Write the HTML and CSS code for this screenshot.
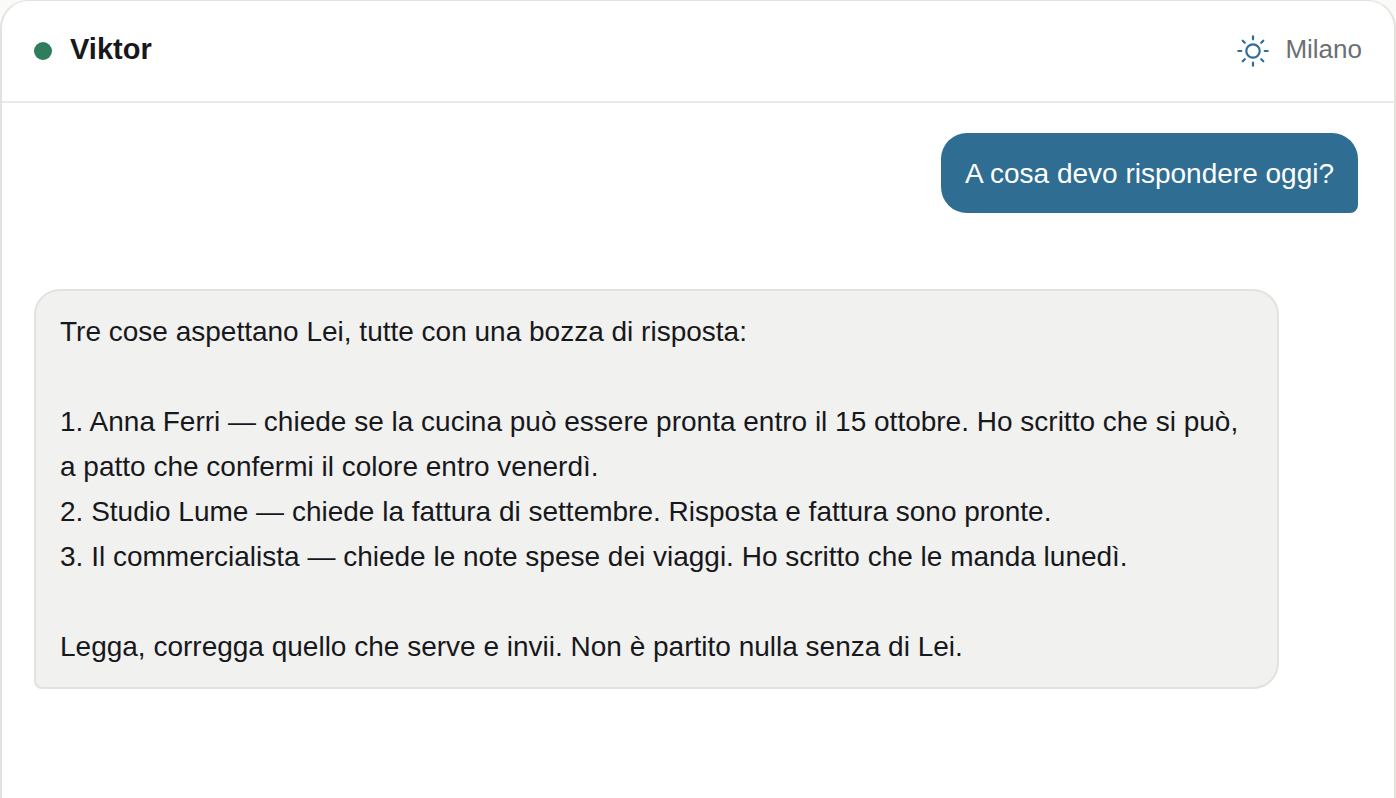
FILE: index.html
```html
<!DOCTYPE html>
<html lang="it">
<head>
<meta charset="utf-8">
<meta name="viewport" content="width=device-width, initial-scale=1">
<title>Viktor</title>
<link rel="stylesheet" href="styles.css">
</head>
<body>
<main class="chat">
  <header class="chat-header">
    <div class="identity">
      <span class="status"></span>
      <h1 class="name">Viktor</h1>
    </div>
    <div class="place">
      <svg class="sun" viewBox="0 0 32 32" aria-hidden="true">
        <circle cx="16" cy="16" r="6.7"/>
        <path d="M16 1.3v3M16 27.7v3M1.3 16h3M27.7 16h3M5.7 5.7l2.1 2.1M24.2 24.2l2.1 2.1M5.7 26.3l2.1-2.1M24.2 7.8l2.1-2.1"/>
      </svg>
      <span class="city">Milano</span>
    </div>
  </header>
  <section class="messages">
    <p class="bubble sent">A cosa devo rispondere oggi?</p>
    <div class="bubble received">
      <p>Tre cose aspettano Lei, tutte con una bozza di risposta:</p>
      <div class="items">
        <p>1. Anna Ferri — chiede se la cucina può essere pronta entro il 15 ottobre. Ho scritto che si può, a patto che confermi il colore entro venerdì.</p>
        <p>2. Studio Lume — chiede la fattura di settembre. Risposta e fattura sono pronte.</p>
        <p>3. Il commercialista — chiede le note spese dei viaggi. Ho scritto che le manda lunedì.</p>
      </div>
      <p>Legga, corregga quello che serve e invii. Non è partito nulla senza di Lei.</p>
    </div>
  </section>
</main>
</body>
</html>
```

FILE: styles.css
```css
* {
  box-sizing: border-box;
  margin: 0;
}

body {
  background: #fafaf8;
  color: #17181c;
  font-family: "Liberation Sans", Arial, sans-serif;
  font-size: 28px;
  line-height: 45px;
}

.chat {
  min-height: 100vh;
  background: #fff;
  border: 2px solid #e2e2df;
  border-top-width: 1px;
  border-bottom: 0;
  border-radius: 28px 28px 0 0;
}

.chat-header {
  display: flex;
  align-items: center;
  justify-content: space-between;
  padding: 28px 32px;
  border-bottom: 2px solid #e9e9e6;
}

.identity {
  display: flex;
  align-items: center;
  gap: 18px;
}

.status {
  width: 18px;
  height: 18px;
  border-radius: 50%;
  background: #2f7d5b;
}

.name,
.city {
  padding-bottom: 4px;
  line-height: 40px;
}

.name {
  font-size: 29px;
  font-weight: 600;
}

.place {
  display: flex;
  align-items: center;
  gap: 16px;
  color: #6b6f76;
  font-size: 26px;
}

.sun {
  width: 32px;
  height: 32px;
  fill: none;
  stroke: #2f6d93;
  stroke-width: 2.2;
  stroke-linecap: round;
}

.messages {
  display: flex;
  flex-direction: column;
  gap: 76px;
  padding: 30px 36px 30px 32px;
}

.bubble {
  max-width: 94%;
  padding: 18px 24px;
  border-radius: 26px;
}

.sent {
  align-self: flex-end;
  padding-bottom: 17px;
  background: #2f6d93;
  color: #fff;
  border-bottom-right-radius: 8px;
}

.received {
  align-self: flex-start;
  display: flex;
  flex-direction: column;
  gap: 45px;
  background: #f1f1ef;
  border: 2px solid #e2e2df;
  border-bottom-left-radius: 8px;
}
```
